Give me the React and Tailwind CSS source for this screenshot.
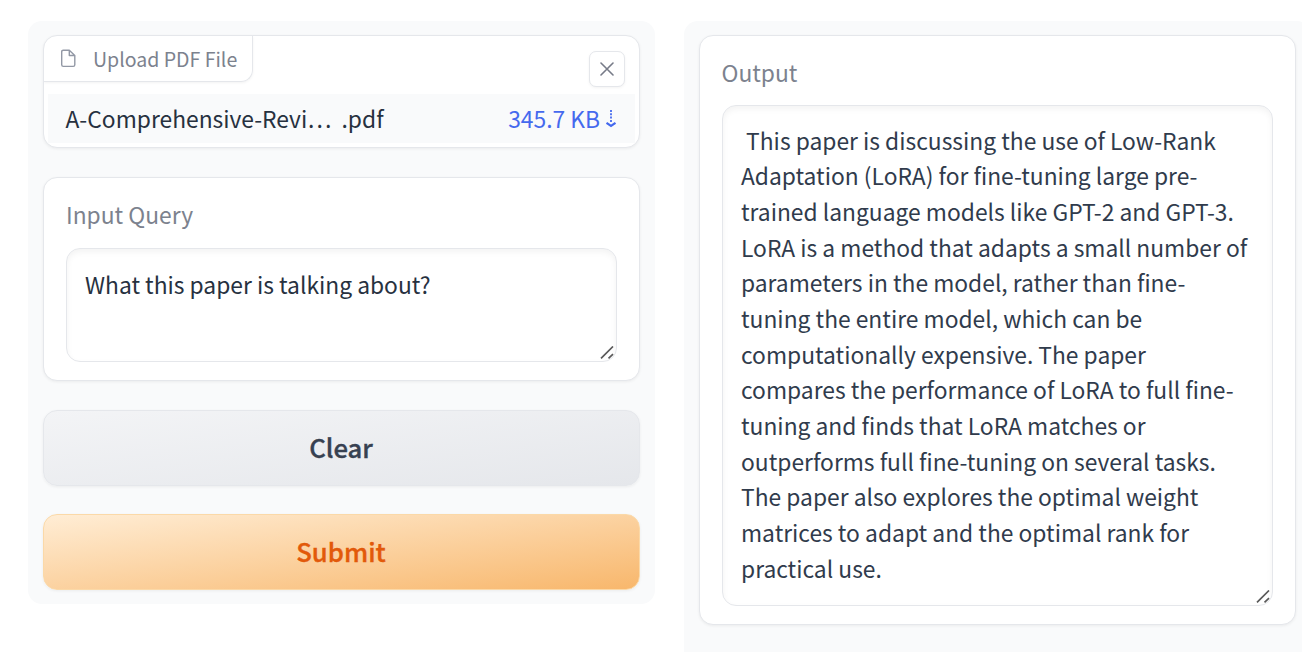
const OUTPUT_LINES = [
  ' This paper is discussing the use of Low-Rank',
  'Adaptation (LoRA) for fine-tuning large pre-',
  'trained language models like GPT-2 and GPT-3.',
  'LoRA is a method that adapts a small number of',
  'parameters in the model, rather than fine-',
  'tuning the entire model, which can be',
  'computationally expensive. The paper',
  'compares the performance of LoRA to full fine-',
  'tuning and finds that LoRA matches or',
  'outperforms full fine-tuning on several tasks.',
  'The paper also explores the optimal weight',
  'matrices to adapt and the optimal rank for',
  'practical use.',
];

function ResizeGrip() {
  return (
    <svg className="absolute right-[1px] bottom-[1px] h-[14px] w-[15px]" viewBox="0 0 15 14" fill="none" stroke="#5a5a5a" strokeWidth="1.7">
      <path d="M1 12.3L13 0.5M8.5 12.3L13 8.1" />
    </svg>
  );
}

function Card({ className, children }) {
  return (
    <section className={`relative rounded-[14px] border border-[#e5e7eb] bg-white shadow-[0_1px_3px_rgba(0,0,0,0.06)] ${className}`}>
      {children}
    </section>
  );
}

function Field({ className, children }) {
  return (
    <div className={`relative rounded-[14px] border border-[#e5e7eb] bg-white text-[#27313f] shadow-[inset_0_3px_6px_rgba(0,0,0,0.05)] ${className}`}>
      {children}
      <ResizeGrip />
    </div>
  );
}

export default function App() {
  return (
    <main className="flex h-[652px] w-[1302px] items-start gap-[29px] overflow-hidden bg-white pt-[21px] pl-[28px] font-['Noto_Sans_CJK_SC',sans-serif] text-[22.82px] leading-[35.67px] text-[#27313f]">
      <div className="flex h-[583px] w-[627px] shrink-0 flex-col rounded-[14px] bg-[#f9fafb] px-[15px] pt-[14px]">
        <Card className="h-[113px] shrink-0 overflow-hidden">
          <div className="flex h-[58px] items-start justify-between">
            <div className="flex h-[46px] w-[209px] items-center rounded-br-[12px] border-r border-b border-[#e5e7eb] pl-[16px] text-[19.55px] text-[#7c828e] shadow-[0_1px_3px_rgba(0,0,0,0.05)]">
              <svg className="h-[19px] w-[17px]" viewBox="0 0 17 19" fill="none" stroke="#9298a5" strokeWidth="1.4" strokeLinejoin="round">
                <path d="M3.3 1.2H9.3L14.8 6.5V15.8Q14.8 17.4 13.2 17.4H3.3Q1.7 17.4 1.7 15.8V2.8Q1.7 1.2 3.3 1.2ZM9.3 1.2V6.5H14.8" />
              </svg>
              <span className="ml-[16px] whitespace-nowrap">Upload PDF File</span>
            </div>
            <button className="mt-[15px] mr-[14px] flex h-[36px] w-[36px] items-center justify-center rounded-[7px] border border-[#e5e7eb] bg-white shadow-[0_1px_3px_rgba(0,0,0,0.05)]">
              <svg className="h-[14px] w-[14px]" viewBox="0 0 14 14" stroke="#777b88" strokeWidth="1.6" strokeLinecap="round">
                <path d="M1 1L13 13M13 1L1 13" />
              </svg>
            </button>
          </div>
          <div className="mx-[4px] flex h-[49px] items-center justify-between bg-[#f9fafb] pr-[18px] pl-[17.5px] whitespace-pre">
            <span className="flex">
              <span className="w-[269px]">A-Comprehensive-Revi…</span>
              <span className="ml-[7px]">.pdf</span>
            </span>
            <span className="flex items-center gap-[5px] text-[#4569ee]">
              345.7 KB
              <svg className="mt-[1px] h-[18px] w-[12px]" viewBox="0 0 12 18" fill="none" stroke="currentColor" strokeWidth="1.8">
                <path d="M6 0V13" strokeDasharray="2 1.3" />
                <path d="M1.5 12.8L6 16L10.5 12.8" strokeWidth="2.2" />
              </svg>
            </span>
          </div>
        </Card>
        <Card className="mt-[29px] h-[204px] shrink-0 px-[22px] pt-[19px]">
          <div className="text-[#7c828e]">Input Query</div>
          <Field className="mt-[15px] h-[114px] pt-[18px] pl-[18px]">What this paper is talking about?</Field>
        </Card>
        <button className="mt-[29px] h-[76px] shrink-0 rounded-[14px] border border-[#e5e7eb] bg-[linear-gradient(to_bottom_right,#f3f4f6,#e5e7eb)] pr-[1px] pb-[3px] text-[25.7px] font-medium text-[#374151] shadow-[0_1px_3px_rgba(0,0,0,0.06)] [-webkit-text-stroke:0.35px_currentColor]">Clear</button>
        <button className="mt-[28px] h-[76px] shrink-0 rounded-[14px] border border-[#fbd9a8] bg-[linear-gradient(to_bottom_right,#ffedd5,#f8b76c)] pr-[1px] pb-[3px] text-[25.7px] font-medium text-[#e2590a] shadow-[0_1px_3px_rgba(0,0,0,0.06)] [-webkit-text-stroke:0.35px_currentColor]">Submit</button>
      </div>
      <div className="h-[660px] w-[627px] shrink-0 rounded-t-[14px] bg-[#f9fafb] px-[15px] pt-[14px]">
        <Card className="h-[590px] w-[597px] px-[22px] pt-[19px]">
          <div className="-ml-[0.5px] text-[#7c828e]">Output</div>
          <Field className="mt-[14px] h-[501px] pt-[17px] pl-[18px]">
            {OUTPUT_LINES.map((line) => (
              <div key={line} className="whitespace-pre text-[#303b4c]">{line}</div>
            ))}
          </Field>
        </Card>
      </div>
    </main>
  );
}
